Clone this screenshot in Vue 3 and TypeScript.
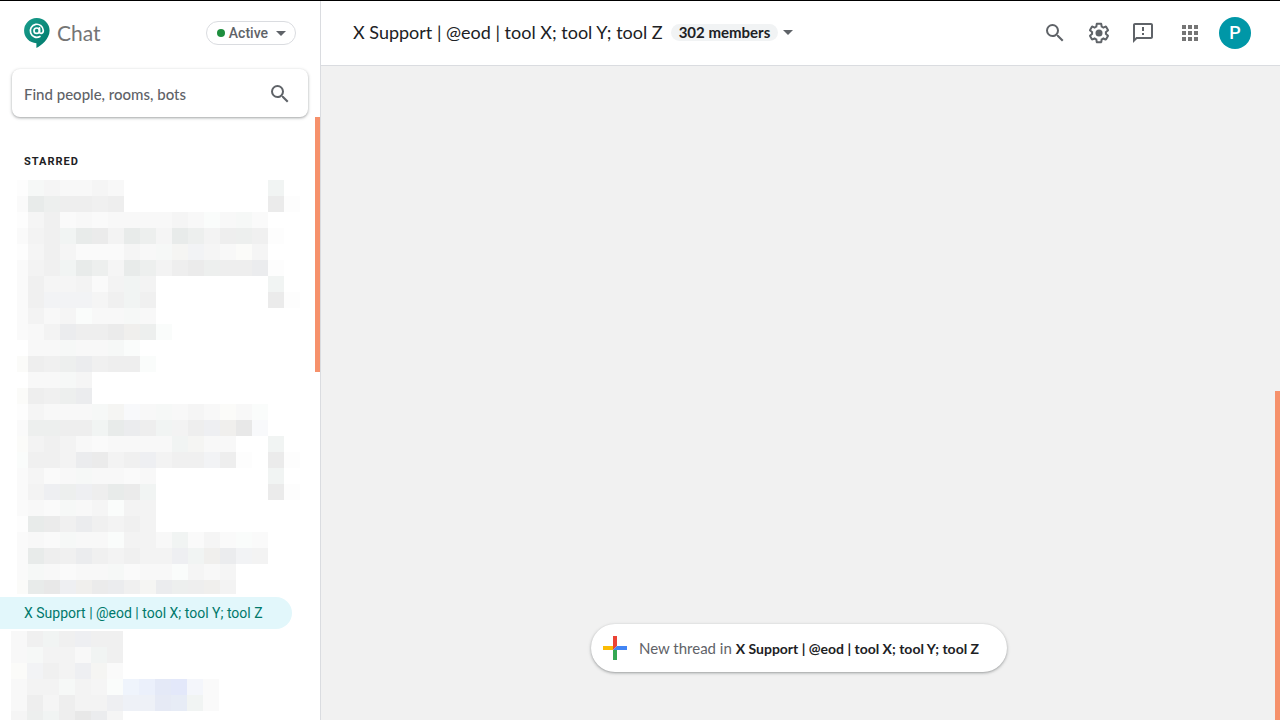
<script setup lang="ts">
import { ref } from 'vue'

interface Cell {
  x: number
  y: number
  w: number
  fill: string
}

const roomName = 'X Support | @eod | tool X; tool Y; tool Z'
const query = ref('')

const CELL = 16

const tones: Record<string, string> = {
  a: '#fdfdfd', b: '#fafafa', c: '#f8f8f8', d: '#f5f5f5', e: '#f3f3f3',
  f: '#f0f0f0', g: '#eeeeee', h: '#ebebeb', i: '#e8e8e8',
  p: '#fafcfb', q: '#f6f8f7', r: '#f1f4f3', s: '#edefee', t: '#e8ebea',
  B: '#f8f9fb', C: '#f2f3f5', D: '#eeeff2', E: '#ebecee',
  w: '#fbfbf9', x: '#f5f5f3', y: '#f0efed',
  K: '#eff4fc', L: '#ebf0fb', M: '#e4e9f7', N: '#e3e8fa', O: '#f4f6fb',
  P: '#eef1f7', Q: '#e6eaf5', R: '#e7ecf6',
}

const starredRows = [
  'aqdccdc.........r.',
  'btsggfg.........ha',
  'adfbcbccccdcpcqb..',
  'befrthetsdtsegsfa.',
  'adfdbbbdcqxCdcwd..',
  'befrtsdtseghsggEa.',
  'bfddebere.......r.',
  'bfCCCdfrf.......ha',
  'becdpccqc',
  'bceEgghysp',
  '.ccqccqp',
  'wgfsEfggp',
  '.ccqd',
  'wgfsE',
  'adcccqxBcqcdcwcp',
  'bssggrtEgregDyiB',
  'wefecbccccrxcc..r.',
  'pffeEhefDeffCga.ha',
  'bdbcqccbc.......r.',
  'beDsDgthr.......ha',
  'bcbqcdpee',
  'athfEfefe',
  'bcbqccpeecrbdbpb',
  'btgfEfefeeDryECe',
  'bqcbccqbccpdcd',
  'wtiDyhEfxEsgye',
]

const recentRows = [
  'cfrfDff',
  'cqeecrf',
  'wCfeDxb',
  'ceeqedpKLMNOb',
  'cgdgeeDPPQRrb',
  'dsrgiEd',
]

function toCells(rows: string[], firstWidth: number): Cell[] {
  return rows.flatMap((row, r) =>
    [...row].flatMap((code, c) =>
      code === '.'
        ? []
        : [{
            x: c === 0 ? 0 : firstWidth + (c - 1) * CELL,
            y: r * CELL,
            w: c === 0 ? firstWidth : CELL,
            fill: tones[code],
          }],
    ),
  )
}

const starredCells = toCells(starredRows, 11)
const recentCells = toCells(recentRows, CELL)
</script>

<template>
  <div class="app">
    <aside class="sidebar">
      <header class="brand-row">
        <a class="brand" href="#" aria-label="Chat home">
          <svg class="logo" width="26" height="30" viewBox="0 0 26 30" aria-hidden="true">
            <defs>
              <linearGradient id="logoFill" x1="0" y1="0" x2="1" y2="1">
                <stop offset="0" stop-color="#1a9e8d" />
                <stop offset="1" stop-color="#00796b" />
              </linearGradient>
            </defs>
            <path d="M13 0a12.6 12.6 0 0 0-.6 25.2V30c4.500-2.200 13.200-8.600 13.200-17.400A12.600 12.600 0 0 0 13 0z" fill="url(#logoFill)" />
            <g fill="none" stroke="#fff" stroke-width="1.700" stroke-linecap="round">
              <circle cx="12.700" cy="12.700" r="2.700" />
              <path d="M15.500 9.800v4c0 2.400 3.800 2.300 3.800-1.300a6.500 6.500 0 1 0-3.400 6" />
            </g>
          </svg>
          <span class="brand-name">Chat</span>
        </a>
        <button class="status" type="button">
          <span class="dot"></span>
          <span>Active</span>
          <svg width="10" height="5" viewBox="0 0 10 5" aria-hidden="true"><path d="M0 0h10L5 5z" fill="#5f6368" /></svg>
        </button>
      </header>

      <form class="search" @submit.prevent>
        <input v-model="query" type="text" placeholder="Find people, rooms, bots" aria-label="Find people, rooms, bots" />
        <button class="icon-button" type="submit" aria-label="Search">
          <svg width="24" height="24" viewBox="0 0 24 24" aria-hidden="true">
            <path fill="#5f6368" d="M15.500 14h-.79l-.28-.27A6.471 6.471 0 0 0 16 9.500 6.500 6.500 0 1 0 9.500 16c1.610 0 3.090-.59 4.230-1.570l.27.28v.79l5 4.990L20.490 19l-4.990-5zm-6 0C7.010 14 5 11.990 5 9.500S7.010 5 9.500 5 14 7.010 14 9.500 11.990 14 9.500 14z" />
          </svg>
        </button>
      </form>

      <nav class="rooms" aria-label="Rooms">
        <h2>STARRED</h2>
        <svg class="starred-list" width="283" height="414" viewBox="0 0 283 414" shape-rendering="crispEdges" aria-hidden="true">
          <rect v-for="(cell, i) in starredCells" :key="i" :x="cell.x" :y="cell.y" :width="cell.w" height="16" :fill="cell.fill" />
        </svg>
        <a class="room" href="#" aria-current="page">{{ roomName }}</a>
        <svg class="recent-list" width="208" height="96" viewBox="0 0 208 96" shape-rendering="crispEdges" aria-hidden="true">
          <rect v-for="(cell, i) in recentCells" :key="i" :x="cell.x" :y="cell.y" :width="cell.w" height="16" :fill="cell.fill" />
        </svg>
        <span class="thumb"></span>
      </nav>
    </aside>

    <div class="main">
      <header class="topbar">
        <div class="title-group">
          <h1>{{ roomName }}</h1>
          <button class="members" type="button">
            <span class="chip">302 members</span>
            <svg width="10" height="5" viewBox="0 0 10 5" aria-hidden="true"><path d="M0 0h10L5 5z" fill="#5f6368" /></svg>
          </button>
        </div>
        <div class="actions">
          <button class="icon-button" type="button" aria-label="Search in room">
            <svg width="24" height="24" viewBox="0 0 24 24" aria-hidden="true">
              <path fill="#5f6368" d="M15.500 14h-.79l-.28-.27A6.471 6.471 0 0 0 16 9.500 6.500 6.500 0 1 0 9.500 16c1.610 0 3.090-.59 4.230-1.570l.27.28v.79l5 4.990L20.490 19l-4.990-5zm-6 0C7.010 14 5 11.990 5 9.500S7.010 5 9.500 5 14 7.010 14 9.500 11.990 14 9.500 14z" />
            </svg>
          </button>
          <button class="icon-button" type="button" aria-label="Settings">
            <svg width="24" height="24" viewBox="0 0 24 24" aria-hidden="true">
              <path fill="#5f6368" d="M13.850 22.250h-3.700c-.74 0-1.360-.54-1.450-1.270l-.27-1.890c-.27-.14-.53-.29-.79-.46l-1.800.72c-.7.260-1.470-.03-1.810-.65L2.200 15.530c-.35-.66-.2-1.440.36-1.880l1.530-1.190c-.01-.15-.02-.3-.02-.46 0-.15.010-.31.020-.46l-1.520-1.190c-.59-.45-.74-1.260-.37-1.880l1.850-3.190c.34-.62 1.110-.9 1.790-.63l1.810.73c.26-.17.520-.32.780-.46l.27-1.910c.09-.7.710-1.250 1.440-1.250h3.700c.74 0 1.360.54 1.450 1.270l.27 1.890c.27.140.53.290.79.460l1.800-.72c.71-.26 1.480.030 1.820.65l1.840 3.180c.36.660.2 1.440-.36 1.880l-1.520 1.190c.01.150.02.300.02.460s-.01.310-.02.460l1.520 1.190c.56.450.72 1.230.37 1.860l-1.860 3.220c-.34.620-1.110.9-1.800.63l-1.800-.72c-.26.170-.52.320-.78.460l-.27 1.910c-.1.680-.72 1.220-1.460 1.220zm-3.230-2h2.760l.37-2.550.53-.22c.44-.18.880-.44 1.340-.78l.45-.34 2.380.96 1.380-2.400-2.030-1.580.07-.56c.03-.26.060-.51.060-.78s-.03-.53-.06-.78l-.07-.56 2.030-1.580-1.390-2.400-2.390.96-.45-.35c-.42-.32-.87-.58-1.330-.77l-.52-.22-.37-2.550h-2.760l-.37 2.550-.53.210c-.44.190-.88.440-1.340.79l-.45.330-2.380-.95-1.390 2.390 2.030 1.580-.07.56a7 7 0 0 0-.06.790c0 .260.020.530.060.780l.07.56-2.030 1.580 1.380 2.400 2.390-.96.45.35c.43.330.86.580 1.330.77l.53.220.38 2.550z" />
              <circle cx="12" cy="12" r="3.500" fill="#5f6368" />
            </svg>
          </button>
          <button class="icon-button" type="button" aria-label="Send feedback">
            <svg width="24" height="24" viewBox="0 0 24 24" aria-hidden="true">
              <path fill="#5f6368" d="M20 2H4c-1.100 0-1.990.9-1.990 2L2 22l4-4h14c1.100 0 2-.9 2-2V4c0-1.100-.9-2-2-2zm0 14H5.170L4 17.170V4h16v12zM11 12h2v2h-2v-2zm0-6h2v4h-2V6z" />
            </svg>
          </button>
          <button class="icon-button apps" type="button" aria-label="Apps">
            <svg width="24" height="24" viewBox="0 0 24 24" aria-hidden="true">
              <path fill="#757575" d="M4 4h4v4H4zM10 4h4v4h-4zM16 4h4v4h-4zM4 10h4v4H4zM10 10h4v4h-4zM16 10h4v4h-4zM4 16h4v4H4zM10 16h4v4h-4zM16 16h4v4h-4z" />
            </svg>
          </button>
          <button class="avatar" type="button" aria-label="Account P">P</button>
        </div>
      </header>

      <main class="stream">
        <button class="new-thread" type="button">
          <svg width="24" height="24" viewBox="0 0 24 24" aria-hidden="true">
            <path fill="#ea4335" d="M10 0h4v10l-4 4z" />
            <path fill="#fbbc04" d="M0 10h10v4H0z" />
            <path fill="#34a853" d="M10 14h4v10h-4z" />
            <path fill="#4285f4" d="M14 10h10v4H10z" />
          </svg>
          <span class="new-label">New thread in <strong>{{ roomName }}</strong></span>
        </button>
        <span class="thumb"></span>
      </main>
    </div>
  </div>
</template>

<style>
body {
  margin: 0;
  overflow: hidden;
}
</style>

<style scoped>
* {
  box-sizing: border-box;
}

.app {
  display: flex;
  height: 100vh;
  border-top: 1px solid #000;
  background: #fff;
  color: #202124;
  font-family: Lato, "Open Sans", sans-serif;
}

button {
  padding: 0;
  border: 0;
  background: none;
  color: inherit;
  font: inherit;
  cursor: pointer;
}

svg {
  display: block;
  flex: none;
}

a {
  color: inherit;
  text-decoration: none;
}

.sidebar {
  display: flex;
  flex: none;
  flex-direction: column;
  width: 321px;
  border-right: 1px solid #dadce0;
}

.brand-row {
  display: flex;
  align-items: center;
  justify-content: space-between;
  height: 64px;
  padding: 0 24px;
}

.brand {
  display: flex;
  align-items: center;
  gap: 7px;
}

.brand-name {
  color: #757575;
  font-size: 21px;
  line-height: 28px;
}

.status {
  display: flex;
  align-items: center;
  height: 24px;
  padding: 0 9px 0 10px;
  border: 1px solid #dadce0;
  border-radius: 12px;
  color: #5f6368;
  font: 500 14px/22px Roboto, sans-serif;
}

.status svg {
  margin-left: 8px;
}

.dot {
  width: 8px;
  height: 8px;
  margin-right: 4px;
  border-radius: 50%;
  background: #1e8e3e;
}

.search {
  display: flex;
  flex: none;
  align-items: center;
  height: 48px;
  margin: 4px 12px 0;
  padding: 2px 16px 0 12px;
  border-radius: 8px;
  background: #fff;
  box-shadow: 0 1px 2px rgba(60, 64, 67, 0.3), 0 1px 3px 1px rgba(60, 64, 67, 0.15);
}

.search input {
  flex: 1;
  min-width: 0;
  padding: 0;
  border: 0;
  outline: 0;
  background: none;
  color: #202124;
  font: 500 15px/20px Lato, sans-serif;
}

.search input::placeholder {
  color: #5f6368;
  opacity: 1;
}

.icon-button {
  display: block;
  width: 24px;
  height: 24px;
}

.rooms {
  position: relative;
  flex: 1;
  min-height: 0;
  overflow: hidden;
}

.rooms h2 {
  margin: 37px 0 10px 24px;
  font: 700 11px/16px Roboto, sans-serif;
  letter-spacing: 1px;
}

.starred-list {
  margin-left: 17px;
}

.room {
  display: block;
  margin: 3px 28px 2px 0;
  padding-left: 24px;
  border-radius: 0 16px 16px 0;
  background: #e2f7fb;
  color: #00796b;
  font: 400 14px/32px Roboto, sans-serif;
  white-space: nowrap;
}

.recent-list {
  margin-left: 11px;
}

.thumb {
  position: absolute;
  right: 0;
  width: 5px;
  background: #f6916b;
}

.rooms .thumb {
  top: 0;
  height: 255px;
}

.main {
  display: flex;
  flex: 1;
  flex-direction: column;
  min-width: 0;
}

.topbar {
  display: flex;
  flex: none;
  align-items: center;
  height: 65px;
  padding: 0 29px 0 32px;
  border-bottom: 1px solid #dadce0;
}

.title-group {
  display: flex;
  align-items: center;
  gap: 8px;
  padding-bottom: 2px;
}

.title-group h1 {
  margin: 0;
  font-size: 18px;
  font-weight: 400;
  line-height: 24px;
  white-space: nowrap;
}

.members {
  display: flex;
  align-items: center;
  gap: 5px;
}

.chip {
  padding: 0 8px;
  border-radius: 9px;
  background: #f1f3f4;
  font-size: 15px;
  font-weight: 700;
  line-height: 17px;
}

.actions {
  display: flex;
  align-items: center;
  gap: 20px;
  margin-left: auto;
}

.apps {
  margin-left: 3px;
}

.avatar {
  width: 32px;
  height: 32px;
  margin-left: -3px;
  border-radius: 50%;
  background: #0097a7;
  color: #fff;
  font: 500 18px/32px Roboto, sans-serif;
}

.stream {
  position: relative;
  display: flex;
  flex: 1;
  align-items: flex-end;
  justify-content: center;
  padding: 0 3px 48px 0;
  background: #f1f1f1;
}

.stream .thumb {
  bottom: 0;
  height: 329px;
}

.new-thread {
  display: flex;
  align-items: center;
  gap: 12px;
  height: 48px;
  padding: 0 28px 0 12px;
  border-radius: 24px;
  background: #fff;
  box-shadow: 0 1px 2px rgba(60, 64, 67, 0.3), 0 1px 3px 1px rgba(60, 64, 67, 0.15);
  white-space: nowrap;
}

.new-label {
  color: #5f6368;
  font-size: 15px;
  line-height: 20px;
}

.new-label strong {
  color: #202124;
  font-size: 14px;
  font-weight: 700;
}
</style>
